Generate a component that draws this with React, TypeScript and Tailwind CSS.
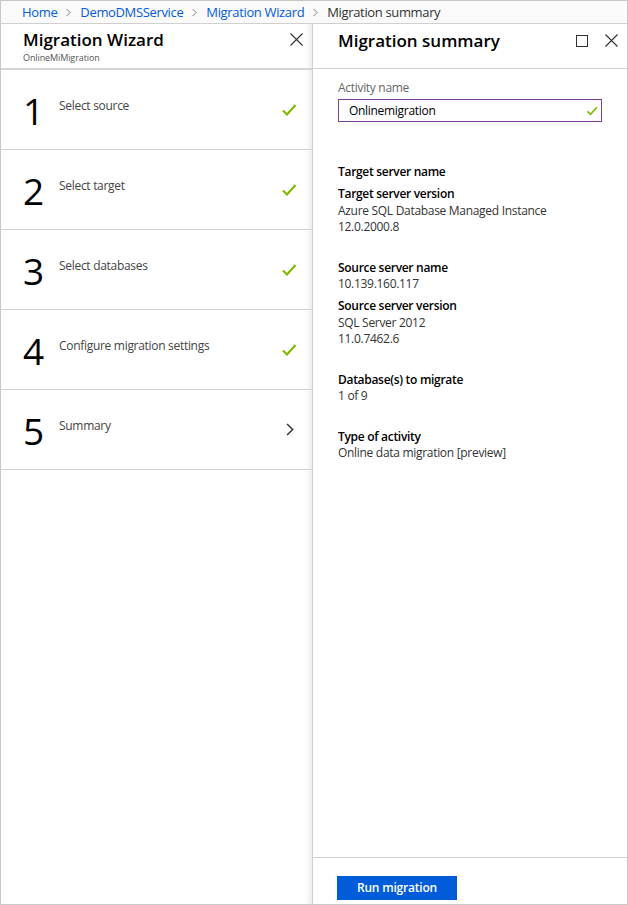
import React from "react";

const font = { fontFamily: '"Open Sans", "Noto Sans", Arial, sans-serif' };

function Check({ size = 16 }: { size?: number }) {
  return (
    <svg width={size} height={size} viewBox="0 0 16 16" fill="none">
      <path d="M2 8.5 L6 12.5 L14.5 3" stroke="#7fba00" strokeWidth="2.2" strokeLinecap="butt" />
    </svg>
  );
}

function CloseX() {
  return (
    <svg width="13" height="13" viewBox="0 0 13 13" fill="none">
      <path d="M0.5 0.5 L12.5 12.5 M12.5 0.5 L0.5 12.5" stroke="#333" strokeWidth="1.1" />
    </svg>
  );
}

function Chevron({ color = "#555", w = 6, h = 10 }: { color?: string; w?: number; h?: number }) {
  return (
    <svg width={w} height={h} viewBox="0 0 6 10" fill="none">
      <path d="M0.8 0.8 L5 5 L0.8 9.2" stroke={color} strokeWidth="1.1" />
    </svg>
  );
}

const steps = [
  { n: "1", label: "Select source", done: true },
  { n: "2", label: "Select target", done: true },
  { n: "3", label: "Select databases", done: true },
  { n: "4", label: "Configure migration settings", done: true },
  { n: "5", label: "Summary", done: false },
];

export default function App() {
  return (
    <div style={font} className="w-[628px] h-[905px] bg-white border border-[#c8c8c8] flex flex-col text-[#333] overflow-hidden">
      {/* Breadcrumb */}
      <div className="h-[23px] shrink-0 border-b border-[#d0d0d0] bg-[#fafafa] flex items-center pl-[21px] text-[13px] leading-none tracking-[-0.35px]">
        <span className="text-[#015cda]">Home</span>
        <span className="mx-[9px] mt-[1px]"><Chevron color="#777" w={5} h={9} /></span>
        <span className="text-[#015cda]">DemoDMSService</span>
        <span className="mx-[9px] mt-[1px]"><Chevron color="#777" w={5} h={9} /></span>
        <span className="text-[#015cda]">Migration Wizard</span>
        <span className="mx-[9px] mt-[1px]"><Chevron color="#777" w={5} h={9} /></span>
        <span className="text-[#333]">Migration summary</span>
      </div>

      <div className="flex flex-1 min-h-0">
        {/* Left panel */}
        <div className="w-[312px] shrink-0 border-r border-[#cfcfcf] shadow-[inset_-7px_0_6px_-5px_rgba(0,0,0,0.10)] flex flex-col">
          <div className="h-[46px] shrink-0 border-b-2 border-[#d4d4d4] flex items-start justify-between pl-[22px] pr-[9px]">
            <div className="pt-[5px]">
              <div className="text-[17px] font-semibold text-black leading-[22px]">Migration Wizard</div>
              <div className="text-[9px] text-[#555] leading-[11px] mt-[1px] tracking-[-0.1px]">OnlineMiMigration</div>
            </div>
            <div className="pt-[9px]">
              <CloseX />
            </div>
          </div>
          {steps.map((s) => (
            <div key={s.n} className="h-[80px] shrink-0 border-b border-[#d0d0d0] flex items-center pl-[22px] pr-[15px]">
              <div className="w-[36px] text-[37px] font-medium leading-[40px] text-black mt-[3px]">{s.n}</div>
              <div className="flex-1 text-[12px] text-[#444] mb-[8px] tracking-[-0.3px]">{s.label}</div>
              {s.done ? (
                <Check size={16} />
              ) : (
                <span className="mr-[3px]"><Chevron color="#333" w={8} h={15} /></span>
              )}
            </div>
          ))}
        </div>

        {/* Right panel */}
        <div className="flex-1 flex flex-col min-w-0">
          <div className="h-[45px] shrink-0 border-b border-[#d0d0d0] flex items-start justify-between pl-[25px] pr-[9px]">
            <div className="text-[17px] font-semibold text-black leading-[22px] pt-[6px]">Migration summary</div>
            <div className="flex items-center gap-[17px] pt-[10px]">
              <div className="w-[12px] h-[12px] border border-[#333]" />
              <CloseX />
            </div>
          </div>

          <div className="flex-1 pl-[25px] pr-[25px] tracking-[-0.3px]">
            <div className="text-[12px] text-[#666] leading-[16px] mt-[11px]">Activity name</div>
            <div className="mt-[3px] h-[23px] border border-[#7f3f98] flex items-center justify-between pl-[10px] pr-[3px]">
              <span className="text-[12px] text-black">Onlinemigration</span>
              <Check size={12} />
            </div>

            <div className="mt-[42px] text-[12px] leading-[16px]">
              <div className="font-semibold text-black">Target server name</div>
              <div className="font-semibold text-black mt-[6px]">Target server version</div>
              <div className="mt-[1px]">Azure SQL Database Managed Instance</div>
              <div>12.0.2000.8</div>

              <div className="font-semibold text-black mt-[25px]">Source server name</div>
              <div>10.139.160.117</div>
              <div className="font-semibold text-black mt-[6px]">Source server version</div>
              <div className="mt-[1px]">SQL Server 2012</div>
              <div>11.0.7462.6</div>

              <div className="font-semibold text-black mt-[25px]">Database(s) to migrate</div>
              <div>1 of 9</div>

              <div className="font-semibold text-black mt-[25px]">Type of activity</div>
              <div>Online data migration [preview]</div>
            </div>
          </div>

          <div className="h-[47px] shrink-0 border-t border-[#d0d0d0] pl-[24px] pt-[16px]">
            <button className="w-[120px] h-[24px] bg-[#015cda] text-white text-[12px] font-semibold leading-none tracking-[-0.2px]">
              Run migration
            </button>
          </div>
        </div>
      </div>
    </div>
  );
}
